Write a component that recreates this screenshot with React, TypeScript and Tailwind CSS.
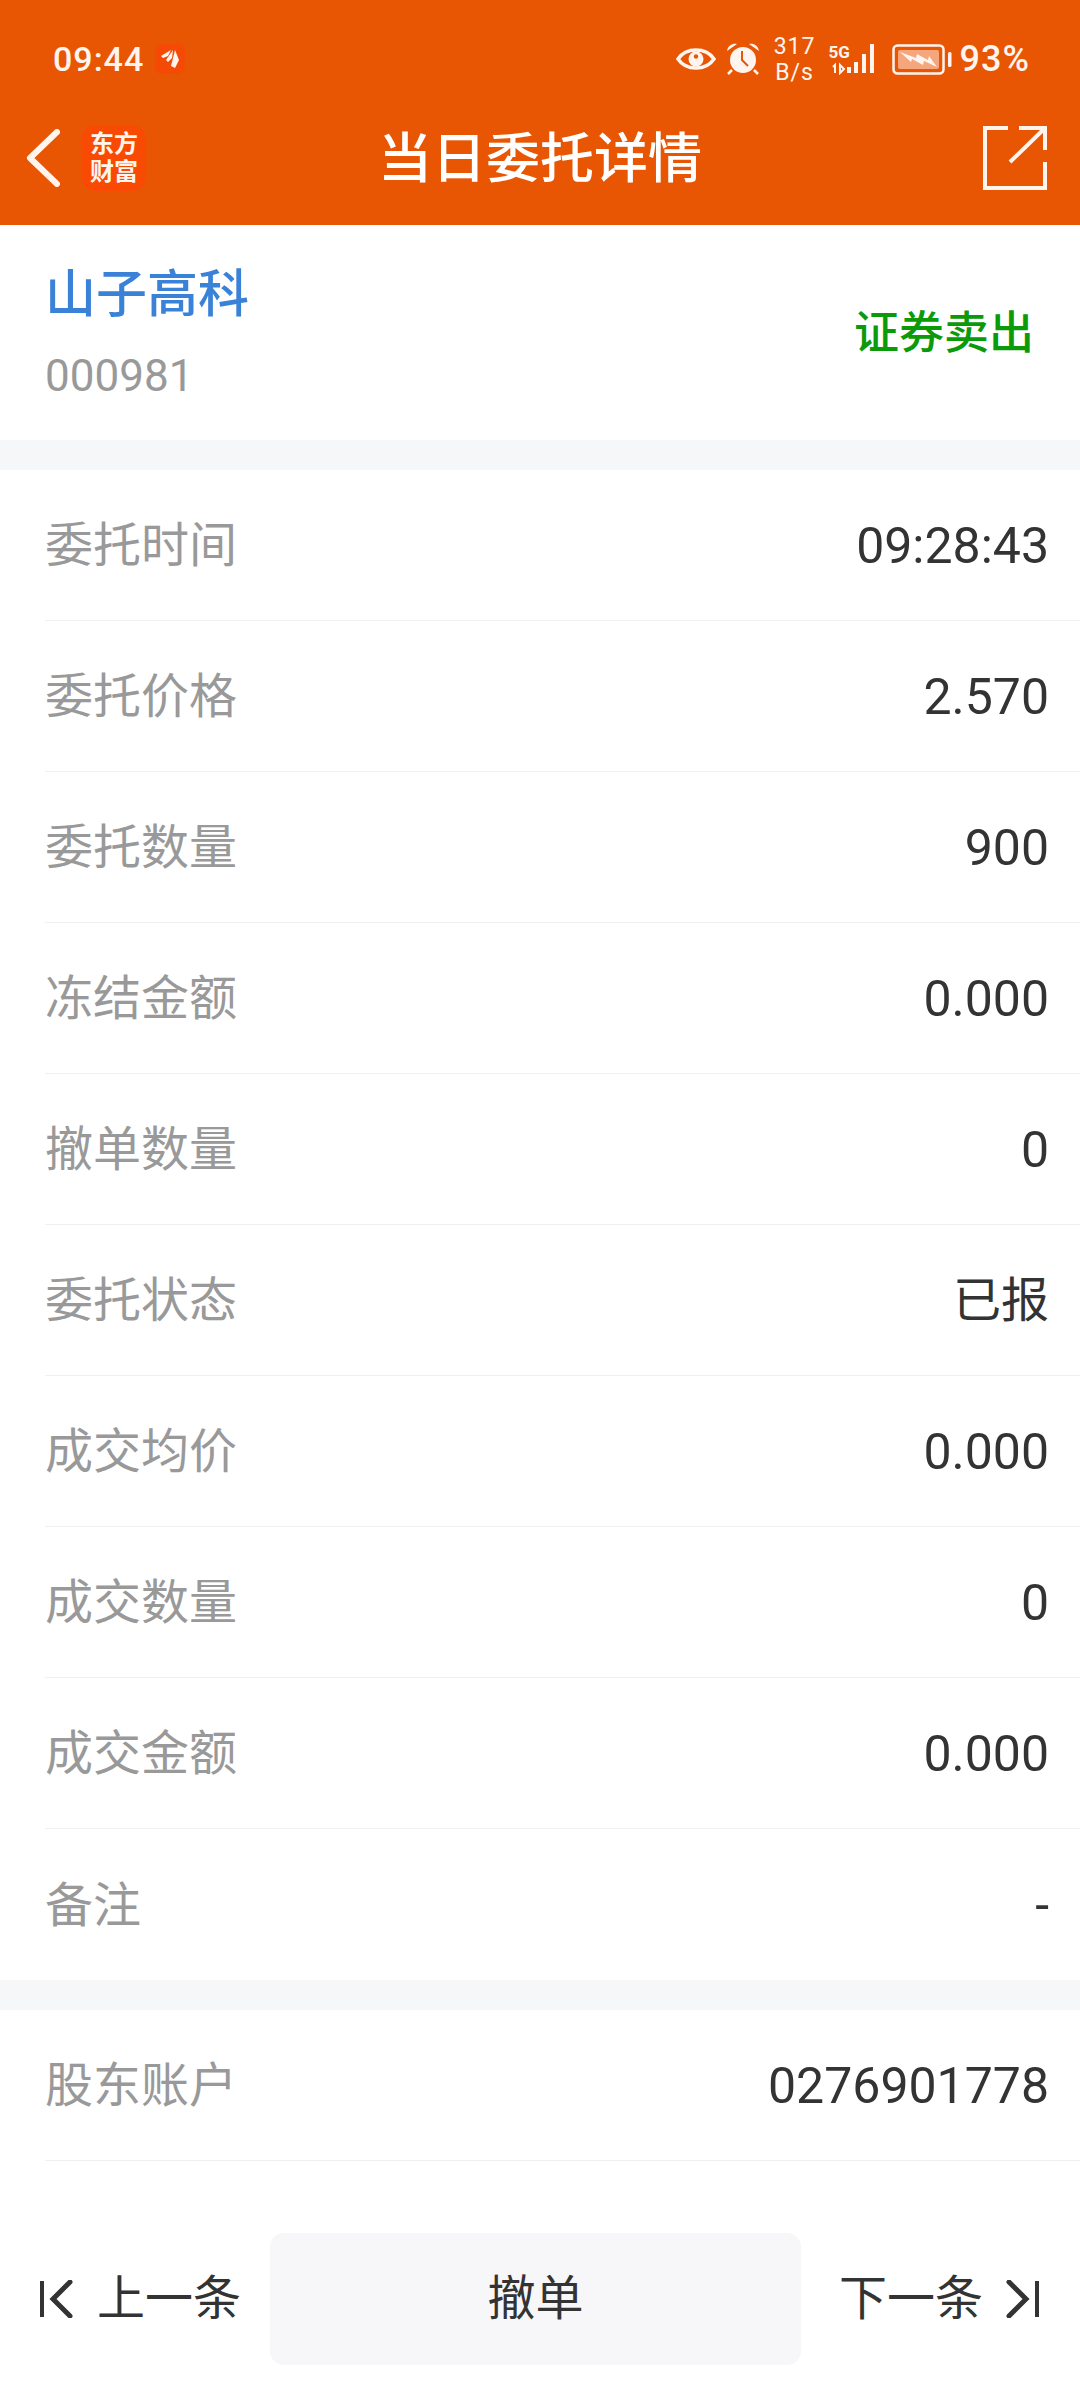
import React from 'react';

const FONT = "font-['Roboto','Noto_Sans_CJK_SC',sans-serif]";

const orderRows = [
  { label: '委托时间', value: '09:28:43' },
  { label: '委托价格', value: '2.570' },
  { label: '委托数量', value: '900' },
  { label: '冻结金额', value: '0.000' },
  { label: '撤单数量', value: '0' },
  { label: '委托状态', value: '已报' },
  { label: '成交均价', value: '0.000' },
  { label: '成交数量', value: '0' },
  { label: '成交金额', value: '0.000' },
  { label: '备注', value: '-' },
];

const Row = ({ label, value, last }: { label: string; value: string; last?: boolean }) => (
  <div className="pl-[45px]">
    <div className={`flex h-[151px] items-center justify-between pt-[2px] pr-[31px] ${last ? '' : 'border-b border-[#f0f0f2]'}`}>
      <span className="text-[48px] text-[#999999]">{label}</span>
      <span className={`${value === '已报' ? 'text-[48px]' : 'text-[50px]'} text-[#333333]`}>{value}</span>
    </div>
  </div>
);

const StatusBar = () => (
  <div className="flex h-[90px] items-center justify-between pt-[28px] pl-[53px] pr-[50px] text-[#fff5ee]">
    <div className="flex items-center gap-[11px]">
      <span className="text-[34px] font-medium leading-none tracking-[1px]">09:44</span>
      <span className="flex h-[30px] w-[30px] items-center justify-center rounded-[7px] bg-[#f44a06]">
        <svg width="20" height="22" viewBox="0 0 20 22" fill="#fff5ee">
          <path d="M1 8 L11 2 L8 8 L3 10Z" />
          <path d="M6 12 L13 2 L12 10 L8 14Z" />
          <path d="M11 18 L15 2 L19 12 L15 20Z" />
        </svg>
      </span>
    </div>
    <div className="flex items-center">
      <svg width="40" height="26" viewBox="0 0 40 26" className="mr-[10px]">
        <path d="M2 13 C10 1 30 1 38 13 C30 25 10 25 2 13Z" fill="none" stroke="#fff5ee" strokeWidth="3.5" />
        <circle cx="20" cy="13" r="7.5" fill="#fff5ee" />
        <circle cx="20" cy="10.5" r="2.2" fill="#e85604" />
      </svg>
      <svg width="34" height="32" viewBox="0 0 34 32" className="mr-[14px]">
        <circle cx="17" cy="17" r="13" fill="#fff5ee" />
        <path d="M1 8 C2 2 7 0 11 1Z M33 8 C32 2 27 0 23 1Z" fill="#fff5ee" />
        <path d="M6 27 L2 31 M28 27 L32 31" stroke="#fff5ee" strokeWidth="2.5" />
        <path d="M16 8 L16 17 L22 23" fill="none" stroke="#e85604" strokeWidth="2" />
      </svg>
      <div className="mr-[13px] flex w-[42px] flex-col items-center pt-[2px] text-[23px] leading-[26px] tracking-[1px]">
        <span>317</span>
        <span>B/s</span>
      </div>
      <div className="relative mr-[13px] h-[32px] w-[50px]">
        <svg width="50" height="32" viewBox="0 0 50 32">
          <rect x="18" y="24" width="4" height="6" fill="#fff5ee" />
          <rect x="25" y="19" width="4" height="11" fill="#fff5ee" />
          <rect x="33" y="11" width="4" height="19" fill="#fff5ee" />
          <rect x="41" y="1" width="4" height="29" fill="#fff5ee" />
          <path d="M4 24 L6 22 L6 30 M11 22 L11 30 L15 26Z" fill="none" stroke="#fff5ee" strokeWidth="2" />
        </svg>
        <span className="absolute left-0 top-[1px] text-[17px] font-bold leading-none">5G</span>
      </div>
      <svg width="60" height="32" viewBox="0 0 60 32" className="mr-[8px]">
        <rect x="1.5" y="2.5" width="50" height="28" rx="4" fill="none" stroke="#fff5ee" strokeWidth="2.5" />
        <rect x="6" y="7" width="41" height="19" rx="2" fill="#f6a67c" />
        <path d="M8 9 L24 15 L25 11 L36 17 L37 13 L45 24 L32 18 L31 22 L20 16 L19 19Z" fill="#fff5ee" />
        <rect x="56" y="9" width="3.5" height="15" rx="1.5" fill="#fff5ee" />
      </svg>
      <span className="text-[36px] font-medium leading-none tracking-[1px]">93%</span>
    </div>
  </div>
);

const NavBar = () => (
  <div className="flex h-[135px] items-center justify-between pl-[26px] pr-[33px]">
    <div className="flex w-[207px] items-center gap-[22px]">
      <svg width="34" height="58" viewBox="0 0 34 58" fill="none">
        <path d="M31 3 L4 29 L31 55" stroke="#fff5ee" strokeWidth="6" strokeLinecap="round" strokeLinejoin="round" />
      </svg>
      <div className="flex h-[66px] w-[64px] items-center justify-center rounded-[14px] bg-[#f84a02] text-center font-['Liberation_Serif','Noto_Sans_CJK_SC',serif] text-[24px] font-bold leading-[28px] text-[#fff5ee]">
        东方<br />财富
      </div>
    </div>
    <span className="mt-[4px] text-[54px] font-medium leading-none text-white">当日委托详情</span>
    <div className="flex w-[200px] justify-end">
      <svg width="64" height="64" viewBox="0 0 64 64" fill="none" stroke="#fff5ee" strokeWidth="4">
        <path d="M25 2 L2 2 L2 62 L62 62 L62 36" />
        <path d="M27 36 L60 4 M36 2 L62 2 L62 24" />
      </svg>
    </div>
  </div>
);

export default function App() {
  return (
    <div className={`flex h-[2388px] w-[1080px] flex-col overflow-hidden bg-white ${FONT}`}>
      <div className="h-[225px] bg-[#e85604]">
        <StatusBar />
        <NavBar />
      </div>

      <div className="flex h-[215px] items-center justify-between pl-[45px] pr-[46px]">
        <div className="flex flex-col">
          <span className="text-[51px] font-medium leading-[60px] text-[#3a82d8]">山子高科</span>
          <span className="mt-[26px] text-[44px] leading-[50px] text-[#999999]">000981</span>
        </div>
        <span className="mt-[2px] text-[45px] font-medium text-[#0a9a0a]">证券卖出</span>
      </div>

      <div className="h-[30px] shrink-0 bg-[#f6f7f9]" />

      {orderRows.map((r, i) => (
        <Row key={r.label} label={r.label} value={r.value} last={i === orderRows.length - 1} />
      ))}

      <div className="h-[30px] shrink-0 bg-[#f6f7f9]" />

      <Row label="股东账户" value="0276901778" />

      <div className="mt-[72px] flex h-[132px] items-center">
        <div className="flex w-[270px] items-center pl-[39px] text-[48px] text-[#333333]">
          <svg width="34" height="38" viewBox="0 0 34 38" fill="none" stroke="#333333" strokeWidth="4">
            <path d="M3 1 L3 37" />
            <path d="M31 2 L14 19 L31 36" strokeWidth="5" strokeLinecap="round" />
          </svg>
          <span className="ml-[24px]">上一条</span>
        </div>
        <div className="flex h-[132px] w-[531px] items-center justify-center rounded-[14px] bg-[#f7f7f9] text-[48px] text-[#333333]">
          撤单
        </div>
        <div className="flex flex-1 items-center justify-end pr-[40px] text-[48px] text-[#333333]">
          <span className="mr-[23px]">下一条</span>
          <svg width="34" height="38" viewBox="0 0 34 38" fill="none" stroke="#333333" strokeWidth="4">
            <path d="M31 1 L31 37" />
            <path d="M3 2 L20 19 L3 36" strokeWidth="5" strokeLinecap="round" />
          </svg>
        </div>
      </div>
    </div>
  );
}
